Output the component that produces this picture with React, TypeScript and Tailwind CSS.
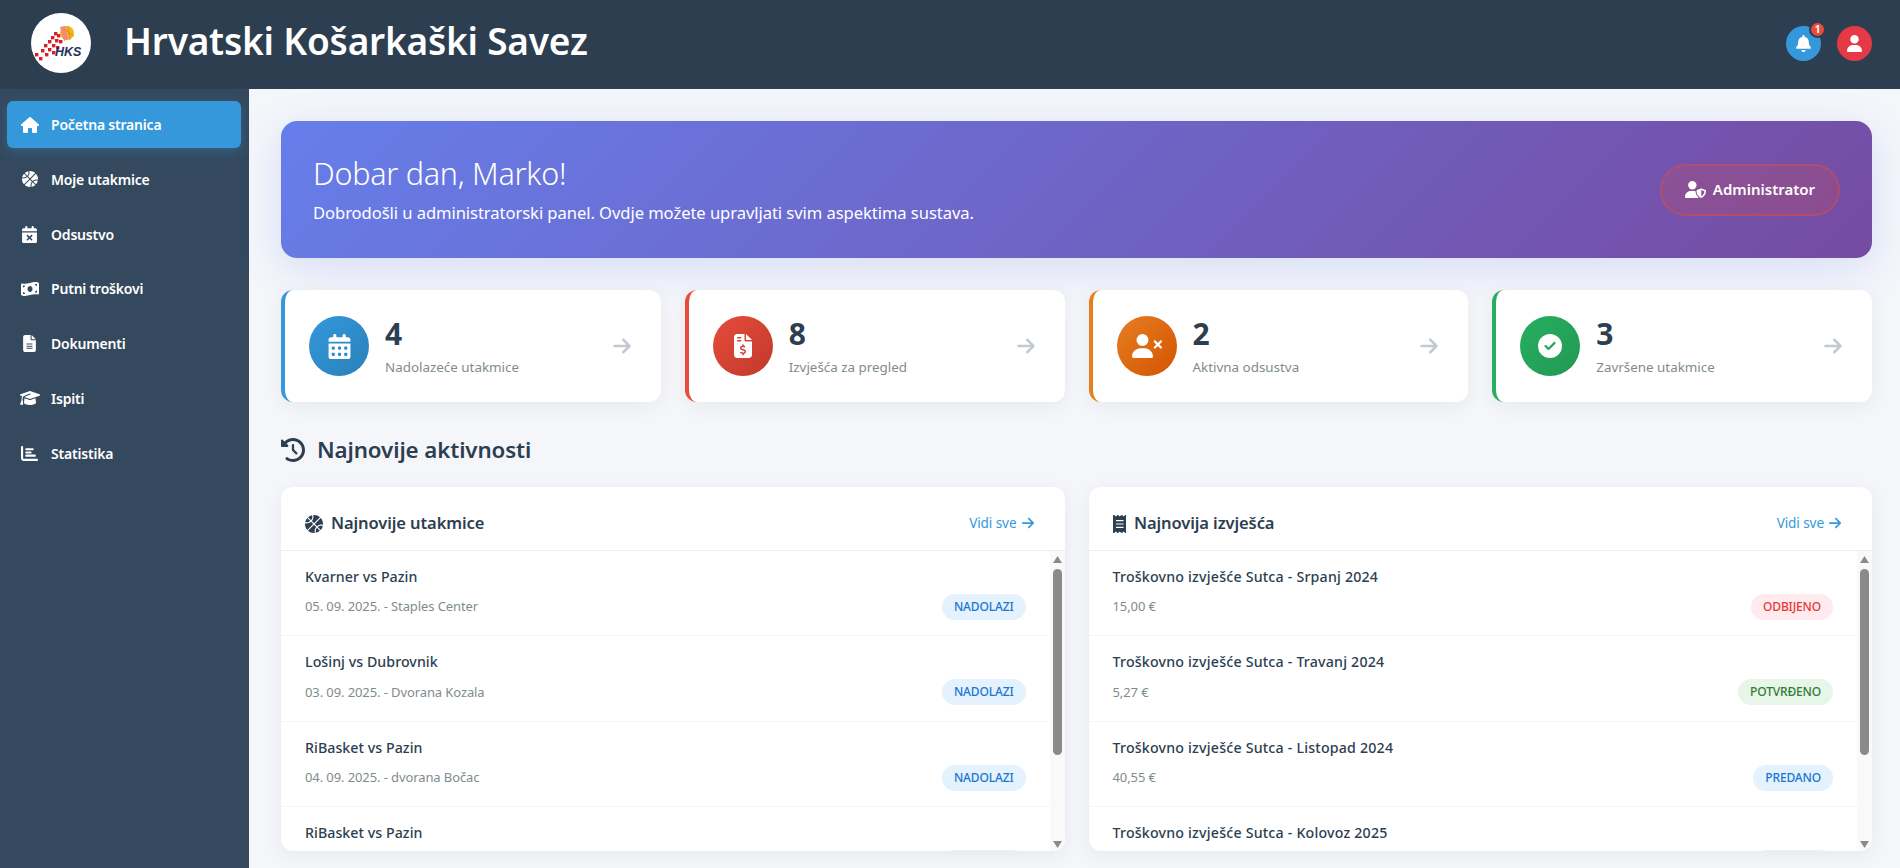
import React from "react";
import {
  FaHouse, FaBasketball, FaCalendarXmark, FaMoneyBillWave, FaFileLines, FaGraduationCap, FaChartBar,
  FaBell, FaUser, FaUserShield, FaCalendarDays, FaFileInvoiceDollar, FaUserXmark, FaCircleCheck,
  FaArrowRight, FaClockRotateLeft, FaReceipt,
} from "react-icons/fa6";

function Logo() {
  const squares: [number, number][] = [
    [4, 40], [8, 44], [10, 36], [14, 40], [13, 31], [17, 35], [21, 38], [17, 27], [21, 31], [25, 33], [20, 23], [24, 26], [23, 19], [26, 21], [28, 27],
  ];
  return (
    <svg viewBox="0 0 60 60" className="w-[60px] h-[60px] shrink-0">
      <circle cx="30" cy="30" r="30" fill="#fff" />
      {squares.map(([x, y], i) => (
        <rect key={i} x={x} y={y} width="3.4" height="3.4" fill="#d8202a" />
      ))}
      <circle cx="36" cy="20" r="7" fill="#f5b223" />
      <path d="M29 14 L34 13 L37 26 L33 28 Z" fill="#f08a7a" />
      <path d="M37 13 L39 27 M33 16 L43 23" stroke="#e07b1a" strokeWidth="0.7" fill="none" />
      <text x="24" y="42.5" fontFamily="'Liberation Sans', sans-serif" fontSize="12.5" fontWeight="700" fontStyle="italic" fill="#23305f">HKS</text>
    </svg>
  );
}

const nav = [
  { label: "Početna stranica", Icon: FaHouse, size: "text-[18px]", active: true },
  { label: "Moje utakmice", Icon: FaBasketball, size: "text-[16px]" },
  { label: "Odsustvo", Icon: FaCalendarXmark, size: "text-[17px]" },
  { label: "Putni troškovi", Icon: FaMoneyBillWave, size: "text-[18px]" },
  { label: "Dokumenti", Icon: FaFileLines, size: "text-[17px]" },
  { label: "Ispiti", Icon: FaGraduationCap, size: "text-[20px]" },
  { label: "Statistika", Icon: FaChartBar, size: "text-[17px]" },
];

const stats = [
  { n: "4", label: "Nadolazeće utakmice", Icon: FaCalendarDays, size: "text-[25px]", border: "border-l-[#3498db]", grad: "bg-[linear-gradient(135deg,#3498db,#2980b9)]" },
  { n: "8", label: "Izvješća za pregled", Icon: FaFileInvoiceDollar, size: "text-[24px]", border: "border-l-[#e74c3c]", grad: "bg-[linear-gradient(135deg,#e74c3c,#c0392b)]" },
  { n: "2", label: "Aktivna odsustva", Icon: FaUserXmark, size: "text-[30px]", border: "border-l-[#e67e22]", grad: "bg-[linear-gradient(135deg,#e67e22,#d35400)]" },
  { n: "3", label: "Završene utakmice", Icon: FaCircleCheck, size: "text-[24px]", border: "border-l-[#27ae60]", grad: "bg-[linear-gradient(135deg,#27ae60,#229954)]" },
];

const blue = "bg-[#e3f2fd] text-[#1976d2]";
const matches = [
  { t: "Kvarner vs Pazin", m: "05. 09. 2025. - Staples Center", b: "NADOLAZI", c: blue },
  { t: "Lošinj vs Dubrovnik", m: "03. 09. 2025. - Dvorana Kozala", b: "NADOLAZI", c: blue },
  { t: "RiBasket vs Pazin", m: "04. 09. 2025. - dvorana Bočac", b: "NADOLAZI", c: blue },
  { t: "RiBasket vs Pazin", m: "04. 09. 2025. - dvorana Bočac", b: "NADOLAZI", c: blue },
];
const reports = [
  { t: "Troškovno izvješće Sutca - Srpanj 2024", m: "15,00 €", b: "ODBIJENO", c: "bg-[#ffebee] text-[#e53935]" },
  { t: "Troškovno izvješće Sutca - Travanj 2024", m: "5,27 €", b: "POTVRĐENO", c: "bg-[#e8f5e9] text-[#2e7d32]" },
  { t: "Troškovno izvješće Sutca - Listopad 2024", m: "40,55 €", b: "PREDANO", c: blue },
  { t: "Troškovno izvješće Sutca - Kolovoz 2025", m: "20,00 €", b: "PREDANO", c: blue },
];

function Panel({ title, Icon, iconSize, rows, track }: { title: string; Icon: React.ComponentType<{ className?: string }>; iconSize: string; rows: typeof matches; track: string }) {
  return (
    <div className="bg-white rounded-[12px] shadow-[0_4px_20px_rgba(0,0,0,0.06)] h-[364px] flex flex-col overflow-hidden min-w-0">
      <div className="h-[64px] shrink-0 border-b border-[#eceff2] flex items-center justify-between pl-[24px] pr-[30px] pt-[10px] pb-0">
        <div className="flex items-center gap-[8px] text-[#2c3e50]">
          <Icon className={iconSize} />
          <span className="text-[16.5px] font-semibold tracking-[-0.1px]">{title}</span>
        </div>
        <a className="flex items-center gap-[4px] text-[#3498db] text-[13.6px] tracking-[-0.1px]">
          Vidi sve <FaArrowRight className="text-[14px]" />
        </a>
      </div>
      <div className="flex flex-1 min-h-0">
        <div className="flex-1 min-w-0 overflow-hidden">
          {rows.map((r, i) => (
            <div key={i} className="h-[85.4px] shrink-0 border-b border-[#f4f5f7] pl-[24px] pr-[24px] pt-[15px]">
              <div className={`text-[14.2px] leading-[22px] font-medium text-[#2c3e50] ${track}`}>{r.t}</div>
              <div className="flex items-center justify-between mt-[6px]">
                <span className="text-[13px] text-[#7f8c8d] tracking-[-0.1px]">{r.m}</span>
                <span className={`h-[26px] px-[12px] rounded-[13px] flex items-center text-[12px] font-medium tracking-[-0.15px] ${r.c}`}>{r.b}</span>
              </div>
            </div>
          ))}
        </div>
        <div className="w-[15px] shrink-0 bg-[#f9f9f9] flex flex-col items-center pt-[5px] pb-[3px]">
          <svg width="9" height="7" viewBox="0 0 9 7" className="shrink-0"><path d="M4.5 0L9 7H0Z" fill="#8a8a8a" /></svg>
          <div className="w-[9px] h-[186px] mt-[6px] rounded-[5px] bg-[#8a8a8a] shrink-0" />
          <div className="flex-1" />
          <svg width="9" height="7" viewBox="0 0 9 7" className="shrink-0"><path d="M4.5 7L9 0H0Z" fill="#8a8a8a" /></svg>
        </div>
      </div>
    </div>
  );
}

export default function App() {
  return (
    <div className="h-[868px] w-full flex flex-col overflow-hidden bg-[#f4f6fa] font-['Noto_Sans','Open_Sans',sans-serif]">
      <header className="h-[89px] shrink-0 bg-[#2c3e50] flex items-center justify-between pl-[31px] pr-[28px] pb-[3px]">
        <div className="flex items-center gap-[33px]">
          <Logo />
          <h1 className="text-[37px] font-semibold text-white tracking-[-0.2px] leading-[50px] mb-[5px]">Hrvatski Košarkaški Savez</h1>
        </div>
        <div className="flex items-center gap-[16px]">
          <div className="relative w-[35px] h-[35px] rounded-full bg-[#3498db] flex items-center justify-center text-white">
            <FaBell className="text-[17px]" />
            <span className="absolute top-[-5px] right-[-5px] w-[17px] h-[17px] rounded-full bg-[#e74c3c] border-2 border-[#2c3e50] flex items-center justify-center text-[10px] font-bold leading-none">1</span>
          </div>
          <div className="w-[35px] h-[35px] rounded-full bg-[#e63946] flex items-center justify-center text-white">
            <FaUser className="text-[17px]" />
          </div>
        </div>
      </header>
      <div className="flex flex-1 min-h-0">
        <aside className="w-[249px] shrink-0 bg-[#34495e] pt-[12px] pl-[7px] pr-[8px] flex flex-col gap-[7.8px]">
          {nav.map(({ label, Icon, size, active }) => (
            <div key={label} className={`h-[47px] rounded-[6px] flex items-center pl-[13px] text-white text-[14px] font-semibold tracking-[-0.2px] ${active ? "bg-[#3498db] shadow-[0_4px_12px_rgba(52,152,219,0.3)]" : ""}`}>
              <span className="w-[19px] flex justify-center mr-[12px]"><Icon className={`${size} shrink-0`} /></span>
              {label}
            </div>
          ))}
        </aside>
        <main className="flex-1 min-w-0 pl-[32px] pr-[28px] pt-[32px]">
          <section className="h-[137px] rounded-[16px] bg-[linear-gradient(135deg,#667eea,#764ba2)] shadow-[0_10px_40px_rgba(102,126,234,0.2)] flex items-center justify-between pl-[32px] pr-[32px] text-white">
            <div className="mb-[2px]">
              <h2 className="text-[30.5px] font-light leading-[40px] tracking-[-0.25px]">Dobar dan, Marko!</h2>
              <p className="text-[16.6px] leading-[24px] mt-[8px] tracking-[-0.07px]">Dobrodošli u administratorski panel. Ovdje možete upravljati svim aspektima sustava.</p>
            </div>
            <div className="w-[180px] h-[52px] rounded-full bg-[rgba(231,76,60,0.2)] border-2 border-[rgba(231,76,60,0.4)] flex items-center justify-center gap-[7px] text-[15px] font-semibold">
              <FaUserShield className="text-[21px]" /> Administrator
            </div>
          </section>

          <div className="grid grid-cols-4 gap-[24px] mt-[32px]">
            {stats.map(({ n, label, Icon, size, border, grad }) => (
              <div key={n} className={`h-[112px] rounded-[12px] bg-white border-l-4 ${border} shadow-[0_4px_20px_rgba(0,0,0,0.06)] flex items-center pl-[24px] pr-[29px]`}>
                <div className={`w-[60px] h-[60px] rounded-full ${grad} flex items-center justify-center text-white shrink-0`}>
                  <Icon className={size} />
                </div>
                <div className="ml-[16px] flex-1 min-w-0">
                  <div className="text-[30px] font-bold text-[#2c3e50] leading-[38px]">{n}</div>
                  <div className="text-[13.4px] text-[#7f8c8d] mt-[4px] leading-[20px]">{label}</div>
                </div>
                <FaArrowRight className="text-[20px] text-[#c4c9d1]" />
              </div>
            ))}
          </div>

          <div className="flex items-center mt-[30px] h-[36px] text-[#2c3e50]">
            <FaClockRotateLeft className="text-[24px] mr-[12px]" />
            <h3 className="text-[22.3px] font-semibold tracking-[-0.1px]">Najnovije aktivnosti</h3>
          </div>

          <div className="grid grid-cols-2 gap-[24px] mt-[19px]">
            <Panel title="Najnovije utakmice" Icon={FaBasketball} iconSize="text-[18px]" rows={matches} track="tracking-[0.05px]" />
            <Panel title="Najnovija izvješća" Icon={FaReceipt} iconSize="h-[18px] w-[13.5px]" rows={reports} track="tracking-[0.2px]" />
          </div>
        </main>
      </div>
    </div>
  );
}
